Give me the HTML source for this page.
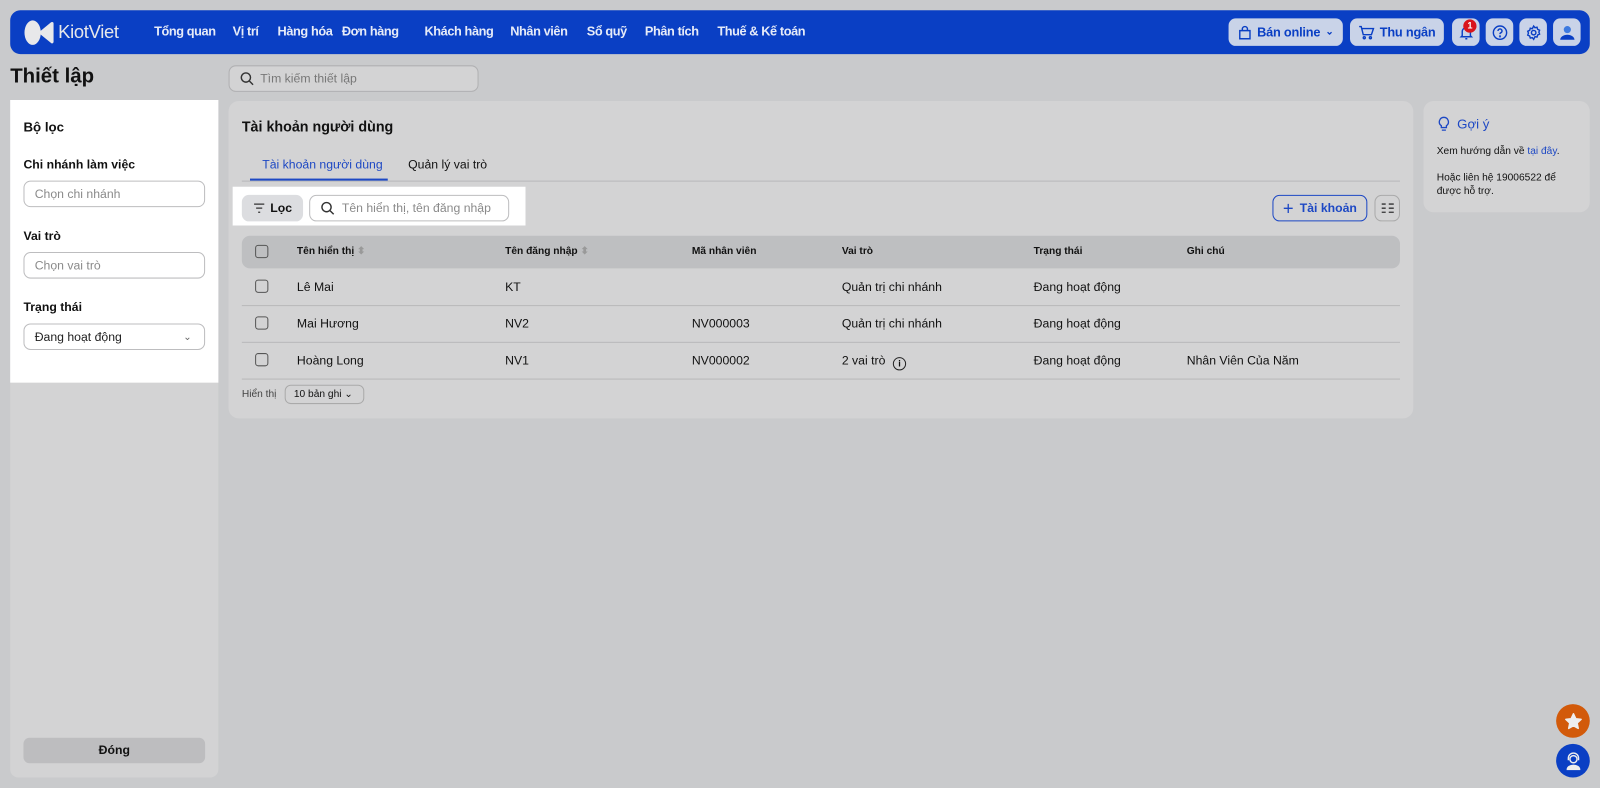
<!DOCTYPE html>
<html><head><meta charset="utf-8"><style>
*{box-sizing:border-box;margin:0;padding:0}
body{width:1600px;height:788px;background:#c9cacc;font-family:"Liberation Sans",Arial,sans-serif;color:#111;overflow:hidden;font-size:13px}
#w{position:absolute;left:0;top:0;width:1568px;height:772px;transform:scale(1.0204);transform-origin:0 0}
.abs{position:absolute}
.nav{left:10px;top:10px;width:1548px;height:43px;background:#0a3fc4;border-radius:10px}
.nav .m{position:absolute;top:14px;color:#e6ebf8;font-size:12.5px;font-weight:bold;letter-spacing:-0.4px}
.btn{position:absolute;top:8px;height:27px;background:#c9d3e8;border-radius:7px;color:#0a3fc4;font-weight:bold;font-size:12.5px;letter-spacing:-0.2px;display:flex;align-items:center;justify-content:center;gap:5px}
.panel{background:#d3d3d4;border-radius:10px}
.inp{position:absolute;border:1px solid #bdbdbf;border-radius:7px;background:#fff;color:#8a8a8a;font-size:12px;display:flex;align-items:center;padding-left:10px}
.cb{position:absolute;left:250px;width:13px;height:13px;border:1.5px solid #555;border-radius:3px}
.t{position:absolute;font-size:12px}
.h{position:absolute;font-size:10px;font-weight:bold;top:241px}
.line{position:absolute;left:237px;width:1135px;height:1px;background:#b8b8ba}
</style></head><body><div id="w">
<div class="abs nav">
  <svg class="abs" style="left:13px;top:9px" width="30" height="26" viewBox="0 0 30 26"><ellipse cx="9" cy="13" rx="8" ry="12" fill="#e8e8ea"/><path d="M28 4 L17 13 L28 22 Z" fill="#e8e8ea" stroke="#e8e8ea" stroke-width="3" stroke-linejoin="round"/></svg>
  <div class="abs" style="left:47px;top:11px;color:#e8e8ea;font-size:18px;letter-spacing:-0.3px">KiotViet</div>
  <div class="m" style="left:141px">Tổng quan</div>
  <div class="m" style="left:218px">Vị trí</div>
  <div class="m" style="left:262px">Hàng hóa</div>
  <div class="m" style="left:325px">Đơn hàng</div>
  <div class="m" style="left:406px">Khách hàng</div>
  <div class="m" style="left:490px">Nhân viên</div>
  <div class="m" style="left:565px">Sổ quỹ</div>
  <div class="m" style="left:622px">Phân tích</div>
  <div class="m" style="left:693px">Thuế &amp; Kế toán</div>
  <div class="btn" style="left:1194px;width:112px"><svg width="14" height="14" viewBox="0 0 14 14" fill="none" stroke="#0a3fc4" stroke-width="1.4"><path d="M2 5h10v8H2z M4.5 5V3.5a2.5 2.5 0 0 1 5 0V5"/></svg>Bán online <span style="font-size:10px">⌄</span></div>
  <div class="btn" style="left:1313px;width:92px"><svg width="16" height="14" viewBox="0 0 16 14" fill="none" stroke="#0a3fc4" stroke-width="1.4"><path d="M1 1h2l2 8h8l2-6H4"/><circle cx="6" cy="12" r="1"/><circle cx="12" cy="12" r="1"/></svg>Thu ngân</div>
  <div class="btn" style="left:1413px;width:27px"><svg width="14" height="14" viewBox="0 0 14 14" fill="none" stroke="#0a3fc4" stroke-width="1.4"><path d="M3 10V6a4 4 0 0 1 8 0v4l1 1H2z M6 13h2"/></svg></div>
  <div class="abs" style="left:1424px;top:9px;width:13px;height:13px;border-radius:50%;background:#d9141c;color:#fff;font-size:9px;font-weight:bold;text-align:center;line-height:13px">1</div>
  <div class="btn" style="left:1446px;width:27px"><svg width="16" height="16" viewBox="0 0 16 16" fill="none" stroke="#0a3fc4" stroke-width="1.4"><circle cx="8" cy="8" r="6.5"/><path d="M6 6.3a2 2 0 1 1 2.5 2c-.5.2-.5.6-.5 1.2"/><circle cx="8" cy="11.6" r=".4"/></svg></div>
  <div class="btn" style="left:1479px;width:27px"><svg width="16" height="16" viewBox="0 0 16 16" fill="none" stroke="#0a3fc4" stroke-width="1.4"><circle cx="8" cy="8" r="2.2"/><path d="M8 1.5l1.3 1.6 2-.4.6 2 1.9.9-.7 1.9.7 1.9-1.9.9-.6 2-2-.4L8 14.5l-1.3-1.6-2 .4-.6-2-1.9-.9.7-1.9-.7-1.9 1.9-.9.6-2 2 .4z"/></svg></div>
  <div class="btn" style="left:1512px;width:27px"><svg width="18" height="18" viewBox="0 0 18 18"><circle cx="9" cy="6" r="3.5" fill="#3d7ae0"/><path d="M2 16a7 5 0 0 1 14 0z" fill="#0a3fc4"/></svg></div>
</div>
<div class="abs" style="left:10px;top:64px;font-size:20px;font-weight:bold">Thiết lập</div>
<div class="inp" style="left:224px;top:64px;width:245px;height:26px;background:#d3d3d4;border-color:#b0b0b2;color:#777"><svg width="14" height="14" viewBox="0 0 14 14" fill="none" stroke="#333" stroke-width="1.4" style="margin-right:6px"><circle cx="6" cy="6" r="4.5"/><path d="M9.5 9.5L13 13"/></svg>Tìm kiếm thiết lập</div>

<div class="abs" style="left:10px;top:98px;width:204px;height:664px;background:#d3d3d4;border-radius:0 0 8px 8px"></div>
<div class="abs" style="left:10px;top:98px;width:204px;height:277px;background:#fff"></div>
<div class="abs" style="left:23px;top:117px;font-size:13px;font-weight:bold">Bộ lọc</div>
<div class="abs" style="left:23px;top:154px;font-size:12px;font-weight:bold">Chi nhánh làm việc</div>
<div class="inp" style="left:23px;top:177px;width:178px;height:26px">Chọn chi nhánh</div>
<div class="abs" style="left:23px;top:224px;font-size:12px;font-weight:bold">Vai trò</div>
<div class="inp" style="left:23px;top:247px;width:178px;height:26px">Chọn vai trò</div>
<div class="abs" style="left:23px;top:294px;font-size:12px;font-weight:bold">Trạng thái</div>
<div class="inp" style="left:23px;top:317px;width:178px;height:26px;color:#222">Đang hoạt động<span style="position:absolute;right:12px;font-size:10px;color:#666">⌄</span></div>
<div class="abs" style="left:23px;top:723px;width:178px;height:25px;background:#bdbdbf;border-radius:6px;font-weight:bold;font-size:12px;text-align:center;line-height:25px">Đóng</div>

<div class="abs panel" style="left:224px;top:99px;width:1161px;height:311px"></div>
<div class="abs" style="left:237px;top:116px;font-size:14px;font-weight:bold">Tài khoản người dùng</div>
<div class="abs" style="left:257px;top:154px;font-size:12px;color:#1d48c4">Tài khoản người dùng</div>
<div class="abs" style="left:400px;top:154px;font-size:12px">Quản lý vai trò</div>
<div class="abs" style="left:237px;top:177px;width:1135px;height:1px;background:#b8b8ba"></div>
<div class="abs" style="left:245px;top:175px;width:135px;height:2px;background:#1d48c4"></div>
<div class="abs" style="left:228px;top:183px;width:287px;height:38px;background:#fff"></div>
<div class="abs" style="left:237px;top:191px;width:60px;height:26px;background:#dcdde0;border-radius:7px;font-weight:bold;font-size:12px;display:flex;align-items:center;justify-content:center;gap:5px"><svg width="12" height="10" viewBox="0 0 12 10" stroke="#333" stroke-width="1.2"><path d="M1 1h10M3 5h6M5 9h2"/></svg>Lọc</div>
<div class="inp" style="left:303px;top:191px;width:196px;height:26px"><svg width="14" height="14" viewBox="0 0 14 14" fill="none" stroke="#333" stroke-width="1.4" style="margin-right:7px"><circle cx="6" cy="6" r="4.5"/><path d="M9.5 9.5L13 13"/></svg>Tên hiển thị, tên đăng nhập</div>
<div class="abs" style="left:1247px;top:191px;width:93px;height:26px;border:1px solid #1d48c4;border-radius:7px;color:#1d48c4;font-weight:bold;font-size:12px;display:flex;align-items:center;justify-content:center;gap:6px"><span style="font-size:18px;font-weight:normal">+</span>Tài khoản</div>
<div class="abs" style="left:1347px;top:191px;width:25px;height:26px;border:1px solid #aaa;border-radius:7px;display:flex;align-items:center;justify-content:center"><svg width="12" height="10" stroke="#333" stroke-width="1.3"><path d="M0 1h4M0 5h4M0 9h4M7 1h5M7 5h5M7 9h5"/></svg></div>

<div class="abs" style="left:237px;top:231px;width:1135px;height:32px;background:#bebfc1;border-radius:8px"></div>
<div class="cb" style="top:240px"></div>
<div class="h" style="left:291px">Tên hiển thị <span style="color:#999">⬍</span></div>
<div class="h" style="left:495px">Tên đăng nhập <span style="color:#999">⬍</span></div>
<div class="h" style="left:678px">Mã nhân viên</div>
<div class="h" style="left:825px">Vai trò</div>
<div class="h" style="left:1013px">Trạng thái</div>
<div class="h" style="left:1163px">Ghi chú</div>

<div class="cb" style="top:274px"></div>
<div class="t" style="left:291px;top:274px">Lê Mai</div><div class="t" style="left:495px;top:274px">KT</div><div class="t" style="left:825px;top:274px">Quản trị chi nhánh</div><div class="t" style="left:1013px;top:274px">Đang hoạt động</div>
<div class="line" style="top:299px"></div>
<div class="cb" style="top:310px"></div>
<div class="t" style="left:291px;top:310px">Mai Hương</div><div class="t" style="left:495px;top:310px">NV2</div><div class="t" style="left:678px;top:310px">NV000003</div><div class="t" style="left:825px;top:310px">Quản trị chi nhánh</div><div class="t" style="left:1013px;top:310px">Đang hoạt động</div>
<div class="line" style="top:335px"></div>
<div class="cb" style="top:346px"></div>
<div class="t" style="left:291px;top:346px">Hoàng Long</div><div class="t" style="left:495px;top:346px">NV1</div><div class="t" style="left:678px;top:346px">NV000002</div><div class="t" style="left:825px;top:346px">2 vai trò <span style="display:inline-block;width:13px;height:13px;border:1.3px solid #222;border-radius:50%;font-size:9px;text-align:center;line-height:11px;margin-left:4px;vertical-align:-2px;font-weight:bold">i</span></div><div class="t" style="left:1013px;top:346px">Đang hoạt động</div><div class="t" style="left:1163px;top:346px">Nhân Viên Của Năm</div>
<div class="line" style="top:371px"></div>
<div class="t" style="left:237px;top:381px;font-size:10px;color:#444">Hiển thị</div>
<div class="abs" style="left:279px;top:377px;width:78px;height:19px;border:1px solid #aaa;border-radius:6px;font-size:10px;line-height:17px;padding-left:8px">10 bản ghi ⌄</div>

<div class="abs panel" style="left:1395px;top:99px;width:163px;height:109px"></div>
<svg class="abs" style="left:1409px;top:114px" width="12" height="15" viewBox="0 0 12 15" fill="none" stroke="#1d48c4" stroke-width="1.3"><path d="M6 1a4.5 4.5 0 0 0-2.5 8.2V11h5V9.2A4.5 4.5 0 0 0 6 1zM4 13.5h4"/></svg>
<div class="abs" style="left:1428px;top:114px;font-size:13px;color:#1d48c4">Gợi ý</div>
<div class="abs" style="left:1408px;top:142px;font-size:10px;line-height:13px">Xem hướng dẫn về <span style="color:#1d48c4">tại đây</span>.</div>
<div class="abs" style="left:1408px;top:168px;font-size:10px;line-height:13px;width:132px">Hoặc liên hệ 19006522 để được hỗ trợ.</div>

<div class="abs" style="left:1525px;top:690px;width:33px;height:33px;border-radius:50%;background:#d25a0a;display:flex;align-items:center;justify-content:center"><svg width="18" height="18" viewBox="0 0 24 24"><path d="M12 2l3 6.5 7 .8-5.2 4.8 1.4 7L12 17.6 5.8 21.1l1.4-7L2 9.3l7-.8z" fill="#eee" stroke="#eee" stroke-linejoin="round" stroke-width="2"/></svg></div>
<div class="abs" style="left:1525px;top:729px;width:33px;height:33px;border-radius:50%;background:#0a3fc4;display:flex;align-items:center;justify-content:center"><svg width="18" height="18" viewBox="0 0 18 18" fill="none" stroke="#eee" stroke-width="1.4"><circle cx="9" cy="7" r="3.5"/><path d="M4 8V6a5 5 0 0 1 10 0v2"/><path d="M3 17a6 4 0 0 1 12 0z" fill="#eee"/></svg></div>
</div></body></html>
